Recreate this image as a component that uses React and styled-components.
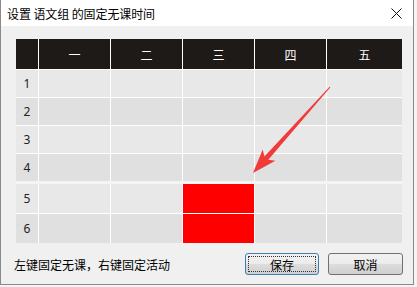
import React from 'react';
import styled, { createGlobalStyle } from 'styled-components';

const GlobalStyle = createGlobalStyle`
  html, body {
    margin: 0;
    padding: 0;
    background: #f4f4f4;
  }
  body {
    font-family: 'Noto Sans CJK SC', 'Noto Sans', sans-serif;
  }
`;

const Window = styled.div`
  position: relative;
  width: 412px;
  height: 284px;
  border: 1px solid #8a8a8a;
  border-top: none;
  background: #f0f0f0;
  display: flex;
  flex-direction: column;
  box-sizing: content-box;
`;

const TitleBar = styled.div`
  height: 26px;
  background: #ffffff;
  display: flex;
  align-items: center;
  justify-content: space-between;
  padding: 0 11px 0 6px;
`;

const Title = styled.div`
  font-size: 12px;
  color: #000;
  letter-spacing: -0.1px;
`;

const Body = styled.div`
  flex: 1;
  display: flex;
  flex-direction: column;
  padding: 13px 10px 0 15px;
`;

const Grid = styled.div`
  display: grid;
  grid-template-columns: 22px 71px 71px 71px 71px 75px;
  grid-template-rows: ${p => (p.$head ? '30px' : 'none')};
  grid-auto-rows: ${p => p.$rows};
  gap: 1px;
  background: #ffffff;
  width: 386px;
`;

const Separator = styled.div`
  height: 3px;
  background: #f4f4f4;
  width: 386px;
`;

const HeadCell = styled.div`
  background: #1e1a18;
  color: #ffffff;
  font-size: 12px;
  display: flex;
  align-items: center;
  justify-content: center;
`;

const Cell = styled.div`
  background: ${p => (p.$busy ? '#ff0000' : p.$even ? '#e0e0e0' : '#e8e8e8')};
  font-size: 12px;
  color: #222;
  display: flex;
  align-items: center;
  justify-content: center;
  font-family: 'Noto Sans', sans-serif;
`;

const Footer = styled.div`
  display: flex;
  align-items: center;
  margin-top: 10px;
`;

const Hint = styled.div`
  flex: 1;
  font-size: 12px;
  color: #000;
  margin-left: -2px;
`;

const Button = styled.button`
  width: ${p => p.$w}px;
  height: 22px;
  margin-left: ${p => p.$gap}px;
  border: 1px solid ${p => (p.$focus ? '#3c7fb1' : '#707070')};
  border-radius: 3px;
  background: linear-gradient(#f2f2f2 0%, #ebebeb 50%, #dddddd 51%, #cfcfcf 100%);
  font-family: 'Noto Sans CJK SC', sans-serif;
  font-size: 12px;
  color: #000;
  padding: 0;
  display: flex;
  align-items: center;
  justify-content: center;
  outline: ${p => (p.$focus ? '1px dotted #333' : 'none')};
  outline-offset: -4px;
`;

const Overlay = styled.svg`
  position: absolute;
  left: 0;
  top: 0;
  width: 417px;
  height: 287px;
  pointer-events: none;
`;

const days = ['一', '二', '三', '四', '五'];
const busy = { '5-2': true, '6-2': true };

function Row({ n }) {
  return (
    <>
      <Cell $even={n % 2 === 0}>{n}</Cell>
      {days.map((d, i) => (
        <Cell key={d} $even={n % 2 === 0} $busy={busy[`${n}-${i}`]} />
      ))}
    </>
  );
}

function Arrow() {
  const tail = [329, 87];
  const tip = [252, 173];
  const dx = tip[0] - tail[0];
  const dy = tip[1] - tail[1];
  const len = Math.hypot(dx, dy);
  const ux = dx / len;
  const uy = dy / len;
  const px = -uy;
  const py = ux;
  const headLen = 24;
  const headW = 8.5;
  const bx = tip[0] - ux * headLen;
  const by = tip[1] - uy * headLen;
  const sw = 2.6;
  const pts = [
    [tail[0] + px * 0.5, tail[1] + py * 0.5],
    [bx + ux * 4 + px * sw, by + uy * 4 + py * sw],
    [bx + px * headW, by + py * headW],
    tip,
    [bx - px * headW, by - py * headW],
    [bx + ux * 4 - px * sw, by + uy * 4 - py * sw],
    [tail[0] - px * 0.5, tail[1] - py * 0.5],
  ];
  return (
    <polygon
      points={pts.map(p => p.map(v => v.toFixed(1)).join(',')).join(' ')}
      fill="#f23a3a"
    />
  );
}

export default function App() {
  return (
    <>
      <GlobalStyle />
      <Window>
        <TitleBar>
          <Title>设置 语文组 的固定无课时间</Title>
          <svg width="11" height="11" viewBox="0 0 11 11">
            <path d="M0.5 0.5 L10.5 10.5 M10.5 0.5 L0.5 10.5" stroke="#111" strokeWidth="1" />
          </svg>
        </TitleBar>
        <Body>
          <Grid $head $rows="27px">
            <HeadCell />
            {days.map(d => (
              <HeadCell key={d}>{d}</HeadCell>
            ))}
            {[1, 2, 3, 4].map(n => (
              <Row key={n} n={n} />
            ))}
          </Grid>
          <Separator />
          <Grid $rows="29px">
            {[5, 6].map(n => (
              <Row key={n} n={n} />
            ))}
          </Grid>
          <Footer>
            <Hint>左键固定无课，右键固定活动</Hint>
            <Button $w={74} $gap={0} $focus>保存</Button>
            <Button $w={75} $gap={9}>取消</Button>
          </Footer>
        </Body>
        <Overlay viewBox="0 0 417 287">
          <Arrow />
        </Overlay>
      </Window>
    </>
  );
}
